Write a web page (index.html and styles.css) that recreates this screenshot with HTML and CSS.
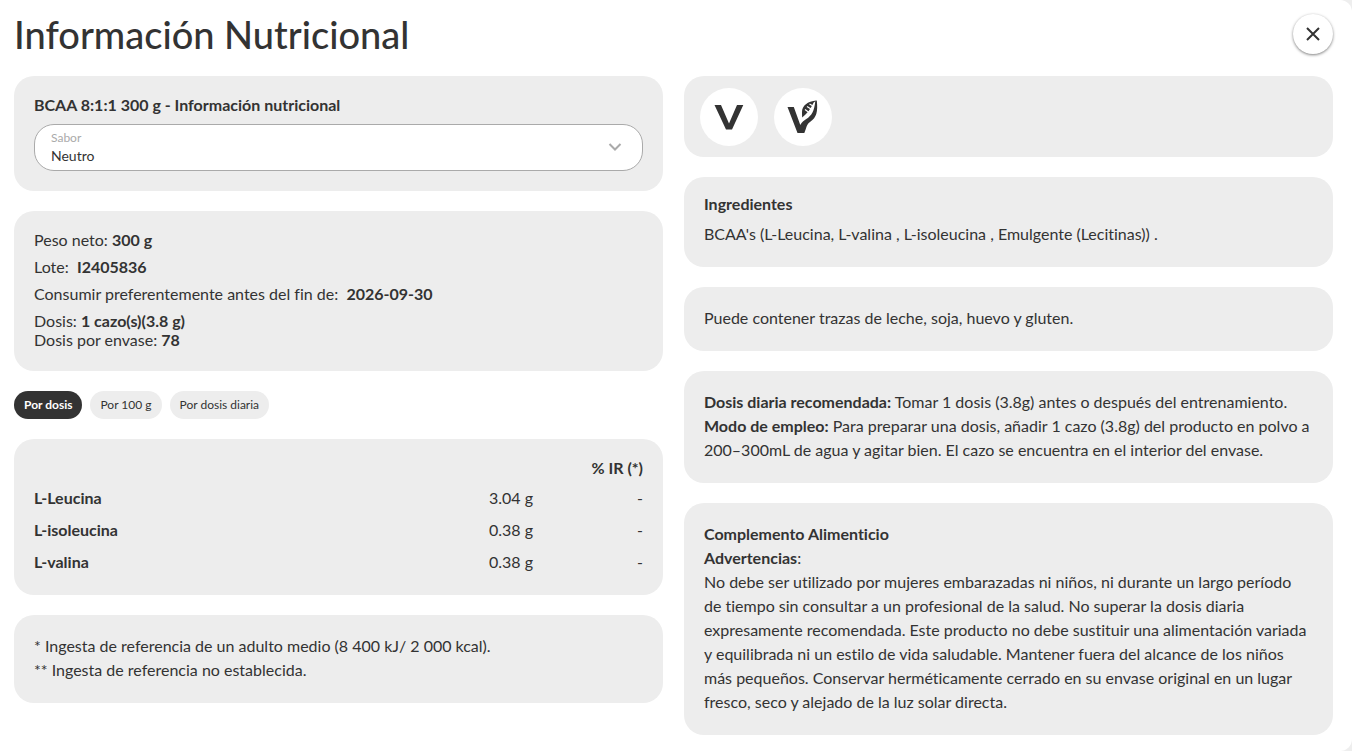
FILE: index.html
```html
<!DOCTYPE html>
<html lang="es">
<head>
  <meta charset="UTF-8" />
  <meta name="viewport" content="width=device-width, initial-scale=1.0"/>
  <title>Información Nutricional</title>
  <link rel="stylesheet" href="styles.css">
</head>
<body>

  <main class="panel">
    <header class="panel-header">
      <h1>Información Nutricional</h1>
      <button type="button" class="close" aria-label="Cerrar">
        <svg width="14" height="14" viewBox="0 0 14 14" fill="none" stroke="currentColor" stroke-width="2">
          <path d="M1 1l12 12M13 1L1 13"/>
        </svg>
      </button>
    </header>

    <div class="columns">
      <!-- Left column -->
      <div class="column">
        <section class="card product">
          <h2>BCAA 8:1:1 300 g - Información nutricional</h2>
          <div class="field">
            <label for="sabor">Sabor</label>
            <select id="sabor" name="sabor">
              <option>Neutro</option>
            </select>
            <svg class="chevron" width="14" height="8" viewBox="0 0 14 8" fill="none" stroke="currentColor" stroke-width="2">
              <path d="M1.500 1l5.500 5.500L12.500 1"/>
            </svg>
          </div>
        </section>

        <section class="card details">
          <p>Peso neto: <strong>300 g</strong></p>
          <p>Lote:&nbsp; <strong>I2405836</strong></p>
          <p>Consumir preferentemente antes del fin de:&nbsp; <strong>2026-09-30</strong></p>
          <p>Dosis: <strong>1 cazo(s)(3.8 g)</strong><br>Dosis por envase: <strong>78</strong></p>
        </section>

        <div class="tabs">
          <button type="button" class="tab active">Por dosis</button>
          <button type="button" class="tab">Por 100 g</button>
          <button type="button" class="tab">Por dosis diaria</button>
        </div>

        <section class="card nutrients">
          <table>
            <thead>
              <tr><td></td><td></td><th>% IR (*)</th></tr>
            </thead>
            <tbody>
              <tr><th>L-Leucina</th><td>3.04 g</td><td>-</td></tr>
              <tr><th>L-isoleucina</th><td>0.38 g</td><td>-</td></tr>
              <tr><th>L-valina</th><td>0.38 g</td><td>-</td></tr>
            </tbody>
          </table>
        </section>

        <section class="card">
          <p>* Ingesta de referencia de un adulto medio (8 400 kJ/ 2 000 kcal).</p>
          <p>** Ingesta de referencia no establecida.</p>
        </section>
      </div>

      <!-- Right column -->
      <div class="column">
        <section class="card badges">
          <span class="badge">
            <svg width="58" height="58" viewBox="0 0 58 58" fill="currentColor" role="img" aria-label="Vegetariano">
              <path d="M14.500 17H21l8 18.500L37 17h6.300L32 41.500h-6z"/>
            </svg>
          </span>
          <span class="badge">
            <svg width="58" height="58" viewBox="0 0 58 58" role="img" aria-label="Vegano">
              <!-- stem and right side of the leaf -->
              <path fill="currentColor" d="M13.500 19h6.300l6.500 18c1.500-3 3.500-4.500 6-6 5.500-3.500 8-8 9-18l1.500-.5c1.200 11-.2 17-6.500 21.300-3 2-3.500 4-4.500 7.200l-1.500 4H23.500z"/>
              <!-- left side of the leaf -->
              <path fill="currentColor" d="M42.500 12.500c-9 .5-14.500 5.500-14.500 11.500 0 2 0 3.500.2 5.500 4.500-3.500 8.500-8.500 11.500-15z"/>
              <path fill="none" stroke="#fff" stroke-width="1.200" d="M31 21.500l4 3M33 18.500l4 2.500M35.500 16l3.500 2"/>
            </svg>
          </span>
        </section>

        <section class="card ingredients">
          <h2>Ingredientes</h2>
          <p>BCAA's (L-Leucina, L-valina , L-isoleucina , Emulgente (Lecitinas)) .</p>
        </section>

        <section class="card">
          <p>Puede contener trazas de leche, soja, huevo y gluten.</p>
        </section>

        <section class="card">
          <p><strong>Dosis diaria recomendada:</strong> Tomar 1 dosis (3.8g) antes o después del entrenamiento.</p>
          <p><strong>Modo de empleo:</strong> Para preparar una dosis, añadir 1 cazo (3.8g) del producto en polvo a 200–300mL de agua y agitar bien. El cazo se encuentra en el interior del envase.</p>
        </section>

        <section class="card">
          <p><strong>Complemento Alimenticio</strong></p>
          <p><strong>Advertencias</strong>:</p>
          <p>No debe ser utilizado por mujeres embarazadas ni niños, ni durante un largo período de&nbsp;tiempo sin consultar a un profesional de la salud. No superar la dosis diaria expresamente recomendada. Este producto no debe sustituir una alimentación variada y equilibrada ni un estilo de vida saludable. Mantener fuera del alcance de los niños más pequeños. Conservar herméticamente cerrado en su envase original en un lugar fresco, seco y alejado de la luz solar directa.</p>
        </section>
      </div>
    </div>
  </main>

</body>
</html>
```

FILE: styles.css
```css
* {
  box-sizing: border-box;
}
body {
  margin: 0;
  background: #eee;
  color: #333;
  font-family: Lato, sans-serif;
  font-size: 16px;
  line-height: 24px;
  font-variant-ligatures: none;
}
h1, h2, p {
  margin: 0;
}
button, select {
  font-family: inherit;
  color: inherit;
}
.panel {
  min-height: 100vh;
  padding: 10px 19px 16px 14px;
  background: #fff;
  border-radius: 0 12px 12px 0;
}
.panel-header {
  display: flex;
  justify-content: space-between;
  align-items: center;
  margin-bottom: 18px;
}
h1 {
  font-size: 38px;
  line-height: 48px;
  font-weight: 500;
}
h2 {
  font-size: 16px;
  line-height: 20px;
  font-weight: 700;
}
.close {
  display: flex;
  align-items: center;
  justify-content: center;
  width: 40px;
  height: 40px;
  padding: 0;
  border: none;
  border-radius: 50%;
  background: #fff;
  box-shadow: 0 1px 3px rgba(0,0,0,0.5);
  cursor: pointer;
}
.columns {
  display: grid;
  grid-template-columns: 1fr 1fr;
  gap: 21px;
  align-items: start;
}
.column {
  display: flex;
  flex-direction: column;
  gap: 20px;
}
.card {
  padding: 19px 20px 21px;
  background: #ededed;
  border-radius: 20px;
}
.product {
  padding-bottom: 20px;
}

/* Flavour picker */
.field {
  position: relative;
  margin-top: 9px;
}
.field label {
  position: absolute;
  top: 6px;
  left: 17px;
  font-size: 12px;
  line-height: 16px;
  color: #aaa;
}
.field select {
  display: block;
  width: 100%;
  height: 47px;
  padding: 16px 40px 0 16px;
  border: 1px solid #aaa;
  border-radius: 20px;
  background: #fff;
  font-size: 14px;
  appearance: none;
}
.chevron {
  position: absolute;
  top: 19px;
  right: 21px;
  color: #aaa;
  pointer-events: none;
}

.details {
  display: flex;
  flex-direction: column;
  gap: 8px;
  padding-bottom: 22px;
  line-height: 19px;
}

/* Serving tabs */
.tabs {
  display: flex;
  gap: 8px;
}
.tab {
  height: 28px;
  padding: 0 10px 1px;
  border: none;
  border-radius: 14px;
  background: #ededed;
  font-size: 12px;
  cursor: pointer;
}
.tab.active {
  background: #333;
  color: #fff;
  font-weight: 700;
}

.nutrients {
  padding: 15px 20px 17px;
}
table {
  width: 100%;
  border-collapse: collapse;
}
th, td {
  width: 110px;
  height: 32px;
  padding: 0;
  text-align: right;
}
thead th, thead td {
  height: 28px;
}
th:first-child, td:first-child {
  width: auto;
  text-align: left;
}

.badges {
  display: flex;
  gap: 16px;
  padding: 12px 16px 11px;
}
.badge {
  width: 58px;
  height: 58px;
  border-radius: 50%;
  background: #fff;
}
.ingredients {
  padding-top: 17px;
}
.ingredients p {
  margin-top: 8px;
}
```
